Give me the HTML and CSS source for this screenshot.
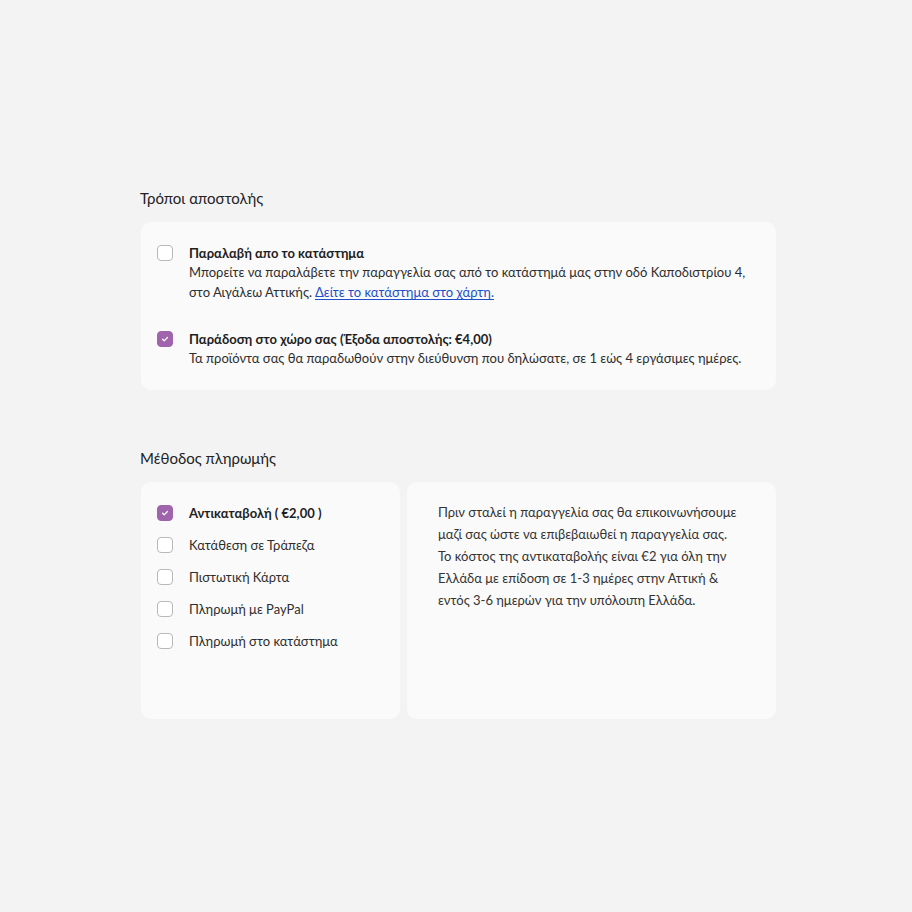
FILE: index.html
```html
<!DOCTYPE html>
<html lang="el">
<head>
    <meta charset="UTF-8">
    <meta name="viewport" content="width=device-width, initial-scale=1.0">
    <title>Ολοκλήρωση παραγγελίας</title>
    <link rel="stylesheet" href="styles.css">
</head>
<body>
    <main class="checkout">
        <section class="section">
            <h2 class="section-title">Τρόποι αποστολής</h2>
            <div class="card shipping">
                <label class="option">
                    <span class="box"></span>
                    <span class="option-body">
                        <span class="option-title">Παραλαβή απο το κατάστημα</span>
                        <span class="option-desc">Μπορείτε να παραλάβετε την παραγγελία σας από το κατάστημά μας στην οδό Καποδιστρίου 4, στο Αιγάλεω Αττικής. <a href="#" class="link">Δείτε το κατάστημα στο χάρτη.</a></span>
                    </span>
                </label>
                <label class="option">
                    <span class="box checked"><svg viewBox="0 0 16 16"><path d="M5.2 8.3l1.9 1.8 3.7-3.9"/></svg></span>
                    <span class="option-body">
                        <span class="option-title">Παράδοση στο χώρο σας (Έξοδα αποστολής: €4,00)</span>
                        <span class="option-desc">Τα προϊόντα σας θα παραδωθούν στην διεύθυνση που δηλώσατε, σε 1 εώς 4 εργάσιμες ημέρες.</span>
                    </span>
                </label>
            </div>
        </section>

        <section class="section">
            <h2 class="section-title">Μέθοδος πληρωμής</h2>
            <div class="payment">
                <div class="card methods">
                    <label class="method">
                        <span class="box checked"><svg viewBox="0 0 16 16"><path d="M5.2 8.3l1.9 1.8 3.7-3.9"/></svg></span>
                        <span class="method-name active">Αντικαταβολή ( €2,00 )</span>
                    </label>
                    <label class="method">
                        <span class="box"></span>
                        <span class="method-name">Κατάθεση σε Τράπεζα</span>
                    </label>
                    <label class="method">
                        <span class="box"></span>
                        <span class="method-name">Πιστωτική Κάρτα</span>
                    </label>
                    <label class="method">
                        <span class="box"></span>
                        <span class="method-name">Πληρωμή με PayPal</span>
                    </label>
                    <label class="method">
                        <span class="box"></span>
                        <span class="method-name">Πληρωμή στο κατάστημα</span>
                    </label>
                </div>
                <div class="card info">
                    <p>Πριν σταλεί η παραγγελία σας θα επικοινωνήσουμε μαζί σας ώστε να επιβεβαιωθεί η παραγγελία σας. Το κόστος της αντικαταβολής είναι €2 για όλη την Ελλάδα με επίδοση σε 1-3 ημέρες στην Αττική &amp; εντός 3-6 ημερών για την υπόλοιπη Ελλάδα.</p>
                </div>
            </div>
        </section>
    </main>
</body>
</html>
```

FILE: styles.css
```css
body {
    margin: 0;
    background-color: #f3f3f3;
    font-family: Lato, 'Noto Sans', sans-serif;
    color: #2b2b2b;
}
.checkout {
    width: 635px;
    margin-left: 141px;
    padding-top: 188px;
}
.section {
    margin-bottom: 58px;
}
.section-title {
    margin: 0 0 14px -1px;
    font-size: 15px;
    font-weight: normal;
    line-height: 20px;
    color: #222;
}
.card {
    background-color: #fafafa;
    border-radius: 10px;
}
.shipping {
    padding: 21px 16px 22px 16px;
    display: flex;
    flex-direction: column;
    gap: 27px;
}
.option {
    display: flex;
    gap: 16px;
    cursor: pointer;
}
.box {
    flex: none;
    width: 16px;
    height: 16px;
    margin-top: 2px;
    box-sizing: border-box;
    border: 1px solid #b8b8b8;
    border-radius: 4px;
    background-color: #fff;
}
.box.checked {
    border-color: #a064ac;
    background-color: #a064ac;
}
.box svg {
    display: block;
    width: 14px;
    height: 14px;
    fill: none;
    stroke: #fff;
    stroke-width: 1.5;
    stroke-linecap: round;
    stroke-linejoin: round;
}
.option-body {
    display: flex;
    flex-direction: column;
    font-size: 13px;
    line-height: 20px;
}
.option-title {
    font-weight: bold;
    color: #1e1e1e;
}
.option-desc {
    color: #2e2e2e;
    margin-top: -1px;
}
.link {
    color: #1d4fc8;
    text-decoration: underline;
    text-underline-offset: 2px;
}
.payment {
    display: flex;
    gap: 7px;
}
.methods {
    width: 259px;
    height: 237px;
    box-sizing: border-box;
    padding: 21px 16px;
    display: flex;
    flex-direction: column;
    gap: 12px;
}
.method {
    display: flex;
    gap: 16px;
    font-size: 13px;
    line-height: 20px;
    cursor: pointer;
}
.method-name {
    color: #2e2e2e;
}
.method-name.active {
    font-weight: bold;
    color: #1e1e1e;
}
.info {
    flex: 1;
    height: 237px;
    box-sizing: border-box;
    padding: 19px 38px 19px 31px;
}
.info p {
    margin: 0;
    font-size: 13px;
    line-height: 22px;
    color: #333;
}
```
